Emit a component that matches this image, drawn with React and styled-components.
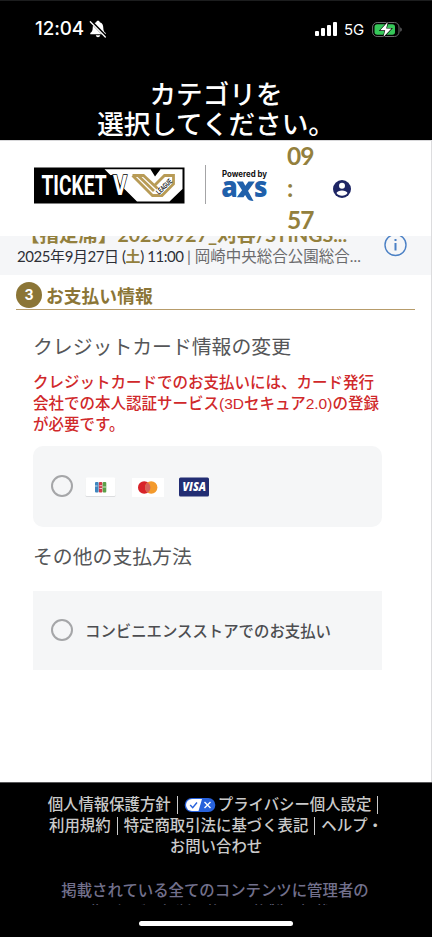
import styled, { createGlobalStyle } from 'styled-components';

const GlobalStyle = createGlobalStyle`
  * {
    box-sizing: border-box;
  }

  body {
    margin: 0;
    font-family: Lato, 'Noto Sans CJK JP', sans-serif;
  }
`;

const Phone = styled.div`
  width: 432px;
  height: 937px;
  display: flex;
  flex-direction: column;
  overflow: hidden;
  background: #000;
`;

const TopArea = styled.header`
  height: 140px;
  flex: none;
  border-top: 1px solid #1c1d1e;
  color: #fff;
`;

const StatusBar = styled.div`
  display: flex;
  align-items: center;
  height: 56px;
  padding: 0 29px 0 35px;
`;

const Clock = styled.span`
  width: 51px;
  margin-right: 3px;
  font: 500 18.8px/56px Inter, sans-serif;
  letter-spacing: -0.1px;
  white-space: nowrap;
`;

const StatusRight = styled.div`
  display: flex;
  align-items: center;
  margin-left: auto;
`;

const Network = styled.span`
  width: 22px;
  margin: 1px 6px 0 7px;
  font: 400 15px/20px Inter, sans-serif;
  white-space: nowrap;
`;

const PageTitle = styled.h1`
  margin: 21px 0 0;
  font: 500 26.6px/30px 'Noto Sans CJK JP', sans-serif;
  text-align: center;
`;

const Page = styled.main`
  height: 642px;
  flex: none;
  border-right: 1px solid #dcdcde;
  background: #fff;
`;

const SiteHeader = styled.div`
  display: flex;
  align-items: center;
  height: 96px;
  padding: 0 0 2px 33px;
  border-top: 1px solid #d8d8da;
`;

const Ticket = styled.svg`
  flex: none;
  margin-bottom: 4px;
`;

const Divider = styled.div`
  width: 1px;
  height: 39px;
  margin: 0 15px 7px 20px;
  background: #a4a4a6;
`;

const Axs = styled.svg`
  flex: none;
  margin-bottom: 4px;
`;

const Timer = styled.div`
  width: 28px;
  margin-left: 18px;
  color: #93803d;
  font-size: 24.5px;
  font-weight: 700;
  line-height: 32px;
  letter-spacing: -0.9px;
`;

const AccountIcon = styled.svg`
  margin-left: 17px;
  margin-top: 2px;
`;

const EventBar = styled.div`
  display: flex;
  height: 39px;
  padding: 0 23px 0 17px;
  overflow: hidden;
  background: #f5f6f8;
`;

const EventText = styled.div`
  width: 367px;
`;

const EventName = styled.div`
  height: 21px;
  margin-top: -12px;
  padding-left: 3px;
  color: #93803d;
  font-size: 19.5px;
  font-weight: 700;
  line-height: 22px;
  white-space: nowrap;
`;

const EventDate = styled.div`
  color: #2d2f36;
  font-size: 15px;
  line-height: 22px;
  white-space: nowrap;
  letter-spacing: -0.43px;

  b {
    color: #93803d;
  }
`;

const Venue = styled.span`
  color: #6b6b6d;
  font-size: 15.5px;
  letter-spacing: 0;
`;

const InfoIcon = styled.svg`
  flex: none;
  margin-top: -3px;
`;

const StepHeading = styled.div`
  display: flex;
  align-items: center;
  height: 35px;
  margin: 0 16px;
  padding-top: 8px;
  border-bottom: 1px solid #b79c6b;
  color: #8b7536;
  font-size: 17.8px;
  font-weight: 700;
  line-height: 26px;
`;

const StepNumber = styled.span`
  width: 26px;
  height: 26px;
  margin: -3px 4px 0 0;
  border-radius: 50%;
  background: #8b7536;
  color: #fff;
  font: 700 14px/26px Inter, sans-serif;
  text-align: center;
`;

const Content = styled.section`
  padding: 22px 49px 0 33px;
`;

const MethodTitle = styled.h2`
  margin: 0;
  color: #555658;
  font-size: 19.85px;
  font-weight: 400;
  line-height: 29px;
`;

const Notice = styled.p`
  margin: 11px 0 10px;
  color: #d0282a;
  font: 500 15.5px/21.2px 'Liberation Sans', 'Noto Sans CJK JP', sans-serif;
  white-space: nowrap;
`;

const Option = styled.label`
  display: flex;
  align-items: center;
  height: ${props => props.$height};
  margin: ${props => props.$margin || '0'};
  padding-left: 18px;
  border-radius: ${props => props.$radius || '0'};
  background: #f5f6f7;
  color: #4c4d50;
  font-size: 15.4px;
  font-weight: 500;
  white-space: nowrap;
`;

const Radio = styled.span`
  width: 22px;
  height: 22px;
  margin-right: 12px;
  border: 2px solid #a5a6a8;
  border-radius: 50%;
`;

const CardIcon = styled.svg`
  margin-top: 2px;
  margin-right: ${props => props.$gap || '0'};
`;

const Footer = styled.footer`
  height: 123px;
  flex: none;
  padding-top: 11px;
  overflow: hidden;
  border-top: 1px solid #58585a;
  background: #000;
  color: #cacaca;
  font-size: 15.4px;
  font-weight: 500;
  line-height: 21px;
  text-align: center;
`;

const FooterRow = styled.div`
  display: flex;
  align-items: center;
  justify-content: center;
  height: 21px;
  white-space: nowrap;
`;

const Bar = styled.span`
  width: 1px;
  height: 18px;
  margin: 0 6px 0 6px;
  background: #cacaca;
`;

const Badge = styled.svg`
  margin-right: 2px;
`;

const Legal = styled.p`
  margin: 22px 0 0;
  padding-right: 2px;
  color: #72708c;
  line-height: 22px;
  white-space: nowrap;
`;

const HomeIndicator = styled.div`
  width: 154px;
  height: 5px;
  margin: 16px auto 0 139px;
  border-radius: 3px;
  background: #fff;
`;

const SilentBell = () => (
  <svg width="18" height="18" viewBox="0 0 18 18">
    <path d="M9 .8c-1.100 0-1.700.7-1.800 1.500C4.700 3 3.700 5 3.700 8c0 2.800-1 4-2.400 5v1.300h15.400V13c-1.400-1-2.400-2.200-2.400-5 0-3-1-5-3.500-5.700C10.700 1.500 10.100.8 9 .8zM6.800 15.300c.2 1.200 1.200 1.900 2.200 1.900s2-.7 2.200-1.900z" fill="#fff" />
    <path d="M1.800 1.200l15 15.300" stroke="#000" strokeWidth="3" />
    <path d="M1.300 1.800L16.300 17" stroke="#fff" strokeWidth="1.300" strokeLinecap="round" />
  </svg>
);

const Signal = () => (
  <svg width="22" height="14" viewBox="0 0 22 14" fill="#fff">
    <rect x="0" y="9" width="4" height="5" rx="1" />
    <rect x="6" y="6" width="4" height="8" rx="1" />
    <rect x="12" y="3" width="4" height="11" rx="1" />
    <rect x="18" y="0" width="4" height="14" rx="1" />
  </svg>
);

const Battery = () => (
  <svg width="31" height="17" viewBox="0 0 31 17">
    <rect x=".6" y="1.500" width="26.400" height="14" rx="4.500" fill="none" stroke="#6b6b6d" />
    <rect x="2.500" y="3.300" width="20.500" height="10.400" rx="2.700" fill="#36c759" />
    <path d="M28.400 6.200c1.700.8 1.700 3.800 0 4.600z" fill="#77777a" />
    <path d="M15.800 1L8.200 9.300h5l-1.800 6.800L19.500 7.500h-5.300z" fill="#fff" stroke="#000" strokeWidth="1.200" paintOrder="stroke" />
  </svg>
);

const TicketLogo = () => (
  <Ticket width="152" height="37" viewBox="0 0 152 37">
    <rect x="1" y=".5" width="150.500" height="36" fill="#000" />
    <path d="M71.500 2.200H117.500L122 9.500L127.500 2.200H149.500V22L136.500 34.500H104z" fill="#fff" />
    <path d="M149.500 24.500V34.500H139z" fill="#000" />
    <path d="M77 8h6.500l5.500 15-1 6z" fill="#000" />
    <text x="80" y="28.200" fill="#fff" stroke="#000" strokeWidth="1.600" paintOrder="stroke" fontFamily="Roboto, sans-serif" fontSize="28.500" fontWeight="700" textLength="14" lengthAdjust="spacingAndGlyphs">V</text>
    <text x="8.500" y="28.200" fill="#fff" fontFamily="Roboto, sans-serif" fontSize="28.500" fontWeight="700" textLength="65" lengthAdjust="spacingAndGlyphs">TICKET</text>
    <path d="M99.500 8.500H110.500L124.500 21.500M99.500 8.500L119.500 28.500H129L140.500 17V8.500H131.500L121 19M105 8.500L121 24" fill="none" stroke="#b89b56" strokeWidth="2.800" />
    <path d="M122 25L136 11.500L139 16L127 28z" fill="#fff" />
    <text x="126" y="28" fill="#111" fontFamily="Liberation Sans, sans-serif" fontSize="7.500" fontWeight="700" transform="rotate(-44 126 28)" textLength="19" lengthAdjust="spacingAndGlyphs">LEAGUE</text>
  </Ticket>
);

const AxsLogo = () => (
  <Axs width="48" height="36" viewBox="0 0 48 36">
    <text x="1" y="9.300" fontFamily="Inter, sans-serif" fontSize="8.500" fontWeight="700" fill="#111" textLength="45" lengthAdjust="spacingAndGlyphs">Powered by</text>
    <g fill="#1f60ab" fontFamily="Open Sans, sans-serif" fontWeight="800" fontSize="29">
      <text x=".3" y="29" textLength="16.500" lengthAdjust="spacingAndGlyphs">a</text>
      <text x="33" y="29" textLength="13.500" lengthAdjust="spacingAndGlyphs">s</text>
    </g>
    <path d="M15.500 13.500h6.500L32.500 33c-3.500 0-5.300-.8-6.800-3.500z" fill="#1f60ab" />
    <path d="M27.500 13.500h6.300L22.500 29.200h-6.700z" fill="#1f60ab" />
  </Axs>
);

const JcbCard = () => (
  <CardIcon width="31" height="20" viewBox="0 0 31 20" $gap="16px">
    <rect x=".5" y="1" width="30" height="19" rx="1.500" fill="#dcdddf" />
    <rect x=".5" y=".5" width="30" height="18.500" rx="1.500" fill="#fff" />
    <rect x="10" y="5" width="3.600" height="10.500" rx="1" fill="#3d85be" />
    <rect x="13.900" y="5" width="3.500" height="10.500" rx="1" fill="#cf3a4a" />
    <rect x="17.700" y="5" width="3.600" height="10.500" rx="1" fill="#5ba047" />
    <path d="M10 9h2.500M14.500 8.700h2.500M14.500 11.500h2.500M18 10h3" stroke="#fff" strokeWidth=".7" />
  </CardIcon>
);

const MasterCard = () => (
  <CardIcon width="32" height="19" viewBox="0 0 32 19" $gap="15px">
    <rect width="32" height="19" fill="#fff" />
    <circle cx="12.200" cy="9.500" r="6.200" fill="#d8232a" />
    <circle cx="19.200" cy="9.500" r="6.200" fill="#f39a2d" />
    <path d="M15.700 4.400a6.200 6.200 0 0 1 0 10.200a6.200 6.200 0 0 1 0-10.200z" fill="#d5605a" />
  </CardIcon>
);

const VisaCard = () => (
  <CardIcon width="30" height="20" viewBox="0 0 30 20">
    <rect y=".5" width="30" height="19" rx="1.500" fill="#222d73" />
    <text x="3.500" y="14.300" fill="#fff" fontFamily="Open Sans, sans-serif" fontSize="11.500" fontStyle="italic" fontWeight="800" textLength="23.500" lengthAdjust="spacingAndGlyphs">VISA</text>
  </CardIcon>
);

const PrivacyBadge = () => (
  <Badge width="32" height="16" viewBox="0 0 32 16">
    <rect x=".7" y="1" width="30.600" height="14" rx="7" fill="#2862dc" />
    <path d="M8 2H18L14.500 14H8A6 6 0 0 1 8 2z" fill="#fff" />
    <path d="M6.200 8l2.500 2.700L13 5.500" fill="none" stroke="#2862dc" strokeWidth="1.400" />
    <path d="M20.500 5l6 6M26.500 5l-6 6" stroke="#fff" strokeWidth="1.400" />
  </Badge>
);

const App = () => (
  <>
    <GlobalStyle />
    <Phone>
      <TopArea>
        <StatusBar>
          <Clock>12:04</Clock>
          <SilentBell />
          <StatusRight>
            <Signal />
            <Network>5G</Network>
            <Battery />
          </StatusRight>
        </StatusBar>
        <PageTitle>カテゴリを<br />選択してください。</PageTitle>
      </TopArea>
      <Page>
        <SiteHeader>
          <TicketLogo />
          <Divider />
          <AxsLogo />
          <Timer>09<br />:<br />57</Timer>
          <AccountIcon width="20" height="20" viewBox="0 0 20 20">
            <circle cx="10" cy="10" r="9" fill="#1d2564" />
            <circle cx="10" cy="6.700" r="3" fill="#fff" />
            <path d="M4.500 14c1-3.500 10-3.500 11 0c-2 3.500-9 3.500-11 0z" fill="#fff" />
          </AccountIcon>
        </SiteHeader>
        <EventBar>
          <EventText>
            <EventName>【指定席】20250927_刈谷/STINGS...</EventName>
            <EventDate>2025年9月27日 (<b>土</b>) 11:00 <Venue>| 岡崎中央総合公園総合...</Venue></EventDate>
          </EventText>
          <InfoIcon width="24" height="24" viewBox="0 0 24 24">
            <circle cx="11.500" cy="12" r="10.500" fill="none" stroke="#4b80c5" strokeWidth="1.400" />
            <path d="M11.500 10v7.500M11.500 6v2" stroke="#4b80c5" strokeWidth="2" />
          </InfoIcon>
        </EventBar>
        <StepHeading>
          <StepNumber>3</StepNumber>
          お支払い情報
        </StepHeading>
        <Content>
          <MethodTitle>クレジットカード情報の変更</MethodTitle>
          <Notice>
            クレジットカードでのお支払いには、カード発行<br />
            会社での本人認証サービス(3Dセキュア2.0)の登録<br />
            が必要です。
          </Notice>
          <Option $height="81px" $radius="10px" $margin="0 0 15px">
            <Radio />
            <JcbCard />
            <MasterCard />
            <VisaCard />
          </Option>
          <MethodTitle>その他の支払方法</MethodTitle>
          <Option $height="79px" $margin="20px 0 0">
            <Radio />
            コンビニエンスストアでのお支払い
          </Option>
        </Content>
      </Page>
      <Footer>
        <FooterRow>
          個人情報保護方針<Bar /><PrivacyBadge />プライバシー個人設定<Bar />
        </FooterRow>
        <FooterRow>
          利用規約<Bar />特定商取引法に基づく表記<Bar />ヘルプ・
        </FooterRow>
        <FooterRow>お問い合わせ</FooterRow>
        <Legal>
          掲載されている全てのコンテンツに管理者の<br />
          承諾を得ず、無断で複写・複製・転載する
        </Legal>
      </Footer>
      <HomeIndicator />
    </Phone>
  </>
);

export default App;
